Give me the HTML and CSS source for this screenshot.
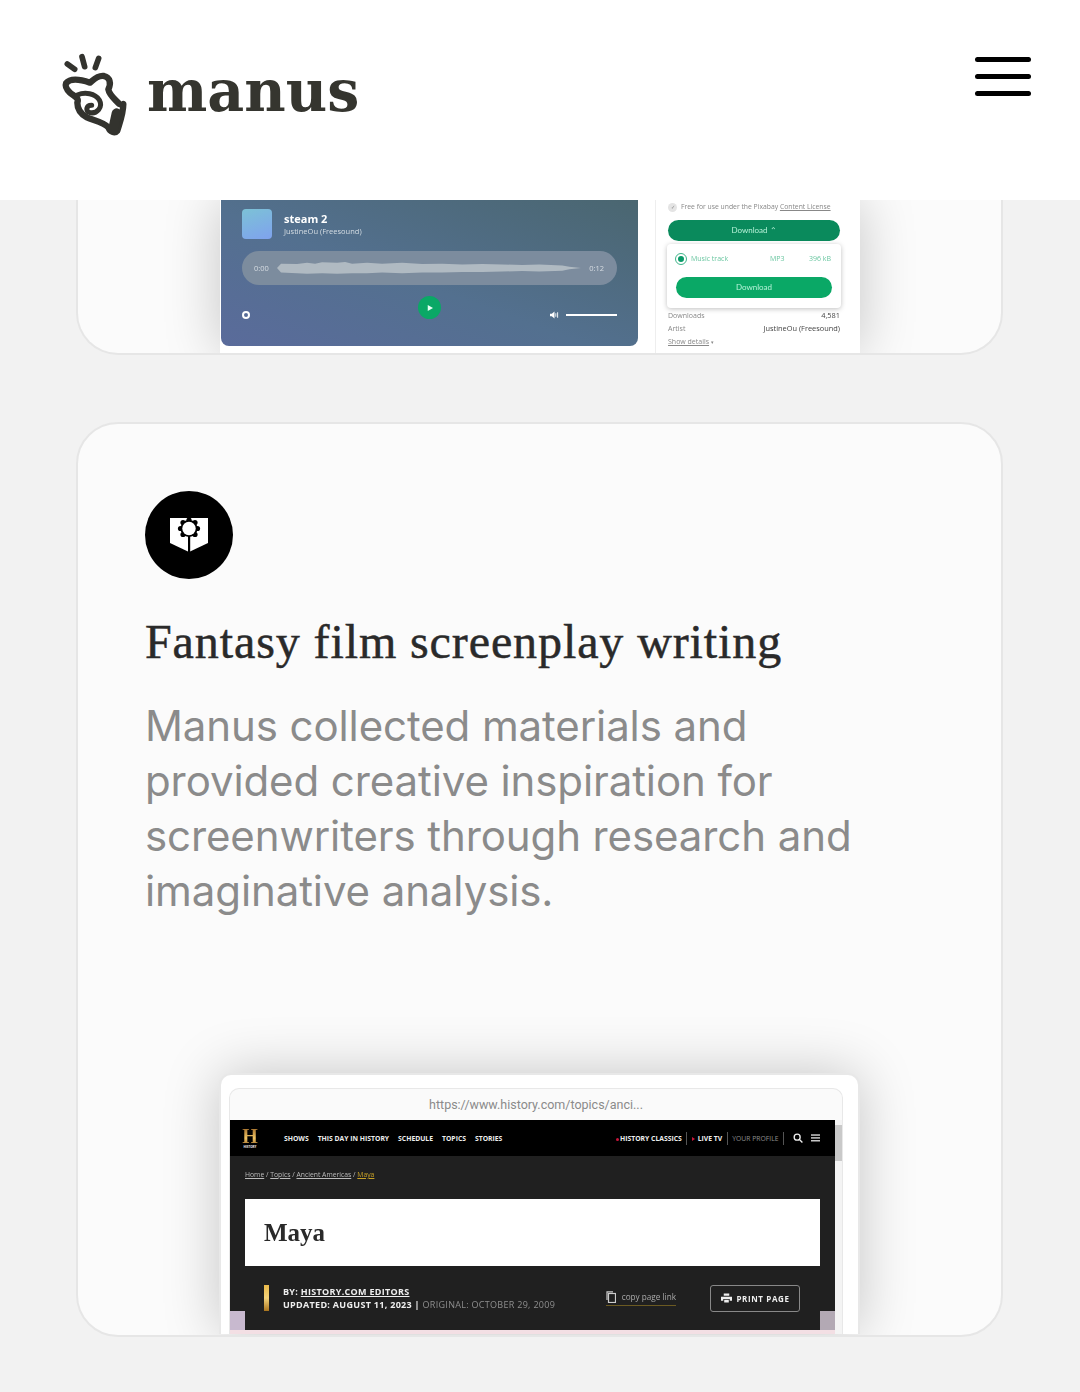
FILE: index.html
```html
<!DOCTYPE html>
<html lang="en">
<head>
  <meta charset="UTF-8" />
  <title>Manus</title>
  <link rel="stylesheet" href="styles.css">
</head>
<body>
  <header class="site-header">
    <a class="logo">
      <svg class="logo-mark" viewBox="60 66 204 258" fill="none" stroke="#33332e" stroke-linecap="round" stroke-linejoin="round">
        <path stroke-width="17" d="M82 102 L104 118 M126 80 L134 110 M176 85 L166 113" />
        <path stroke-width="19" d="M78 160 C90 145 120 148 150 158 C160 150 172 135 192 138 C210 142 214 160 205 178 C208 196 222 205 238 222 C246 226 250 222 250 222 C250 250 240 275 232 302 C224 312 210 305 205 292 C195 278 165 272 140 262 C120 250 112 235 112 218 C118 205 105 200 90 188 C80 178 74 170 78 160 Z" />
        <path stroke-width="15" d="M112 195 C135 185 165 190 178 210 C190 232 170 252 150 248 C135 244 138 226 155 226" />
        <path stroke-width="30" d="M230 250 L220 296" />
      </svg>
      <span class="logo-text">manus</span>
    </a>
    <div class="burger"><span></span><span></span><span></span></div>
  </header>

  <section class="card card-cut">
    <div class="preview audio-preview">
      <div class="player">
        <div class="track">
          <div class="cover"></div>
          <div>
            <div class="track-name">steam 2</div>
            <div class="track-artist">JustineOu (Freesound)</div>
          </div>
        </div>
        <div class="wave">
          <span>0:00</span>
          <svg class="wave-shape" viewBox="0 0 304 16" preserveAspectRatio="none">
            <path fill="#b0bac2" d="M0 8 L4 3 L20 3.5 L30 2 L38 3 L45 1.5 L60 2 L68 1 L75 3 L90 2 L105 3 L125 2 L145 3.5 L165 3 L185 4 L205 3.5 L225 4 L245 4.5 L262 4 L285 5 L292 6.5 L304 8 L292 9.5 L285 11 L262 12 L245 11.5 L225 12 L205 12.5 L185 12.5 L165 13 L145 13 L125 14 L105 13 L90 14 L75 14 L60 14.5 L45 14 L30 14.5 L20 14 L4 13 Z" />
          </svg>
          <span>0:12</span>
        </div>
        <div class="controls">
          <span class="repeat"></span>
          <span class="play">
            <svg viewBox="0 0 8 8" width="6" height="6"><path fill="#e8fff4" d="M1 0 L8 4 L1 8 Z" /></svg>
          </span>
          <span class="volume">
            <svg viewBox="0 0 10 8" width="9" height="8"><path fill="#fff" d="M0 2.5 H2 L5 0 V8 L2 5.5 H0 Z M6 2 H7 V6 H6 Z M8 1 H9 V7 H8 Z" /></svg>
            <span class="volume-bar"></span>
          </span>
        </div>
      </div>
      <aside class="side">
        <div class="license"><span class="check">✓</span>Free for use under the Pixabay <u>Content License</u></div>
        <div class="btn btn-dark">Download ⌃</div>
        <div class="popup">
          <div class="popup-row">
            <span class="radio"></span>
            <span class="popup-label">Music track</span>
            <span class="popup-format">MP3</span>
            <span>396 kB</span>
          </div>
          <div class="btn btn-green">Download</div>
        </div>
        <div class="meta-row"><span>Downloads</span><b>4,581</b></div>
        <div class="meta-row"><span>Artist</span><b>JustineOu (Freesound)</b></div>
        <div class="meta-row"><span><u>Show details</u> <span class="caret">▾</span></span></div>
      </aside>
    </div>
  </section>

  <section class="card card-main">
    <div class="card-icon">
      <svg viewBox="0 0 88 88" width="88" height="88">
        <path fill="#fff" d="M25 27 H63 V52 L44 61 L25 52 Z" />
        <g fill="#000">
          <circle cx="44" cy="37.5" r="8.5" />
          <circle cx="44" cy="29" r="2.6" />
          <circle cx="50" cy="31.5" r="2.6" />
          <circle cx="52.5" cy="37.5" r="2.6" />
          <circle cx="50" cy="43.5" r="2.6" />
          <circle cx="38" cy="43.5" r="2.6" />
          <circle cx="35.5" cy="37.5" r="2.6" />
          <circle cx="38" cy="31.5" r="2.6" />
          <rect x="43" y="45" width="2.2" height="17" />
        </g>
        <circle cx="44" cy="37.5" r="6.7" fill="#fff" />
      </svg>
    </div>
    <h2 class="card-title">Fantasy film screenplay writing</h2>
    <p class="card-text">Manus collected materials and provided creative inspiration for screenwriters through research and imaginative analysis.</p>

    <div class="preview browser-frame">
      <div class="browser">
        <div class="url-bar">https://www.history.com/topics/anci...</div>
        <div class="browser-body">
          <div class="site">
            <nav class="site-nav">
              <div class="h-logo"><span class="h-mark">H</span><span class="h-word">HISTORY</span></div>
              <span>SHOWS</span><span>THIS DAY IN HISTORY</span><span>SCHEDULE</span><span>TOPICS</span><span>STORIES</span>
              <div class="nav-right">
                <span><i class="red-dot"></i>HISTORY CLASSICS</span>
                <span class="nav-sep"></span>
                <span><i class="red-arrow"></i>LIVE TV</span>
                <span class="nav-sep"></span>
                <span class="nav-dim">YOUR PROFILE</span>
                <span class="nav-sep"></span>
                <svg class="nav-search" viewBox="0 0 12 12" width="10" height="10" fill="none" stroke="#eee" stroke-width="1.6"><circle cx="5" cy="5" r="3.6" /><path d="M8 8 L11.3 11.3" /></svg>
                <svg class="nav-menu" viewBox="0 0 10 8" width="9" height="8" fill="#eee"><rect width="10" height="1.4" /><rect y="3.2" width="10" height="1.4" /><rect y="6.4" width="10" height="1.4" /></svg>
              </div>
            </nav>
            <div class="site-body">
              <div class="gutter"><span class="strip strip-l"></span></div>
              <div class="site-main">
                <div class="crumbs"><u>Home</u> / <u>Topics</u> / <u>Ancient Americas</u> / <u class="crumb-now">Maya</u></div>
                <div class="hero">Maya</div>
                <div class="byline">
                  <span class="gold-bar"></span>
                  <div class="byline-text">
                    <div>BY: <u>HISTORY.COM EDITORS</u></div>
                    <div>UPDATED: AUGUST 11, 2023 | <span class="nav-dim">ORIGINAL: OCTOBER 29, 2009</span></div>
                  </div>
                  <div class="copy-link">
                    <svg viewBox="0 0 10 12" width="10" height="12" fill="none" stroke="#ccc" stroke-width="1.2"><rect x="2.5" y="2.5" width="7" height="9" /><path d="M1 9 V.8 H7" /></svg>
                    copy page link
                  </div>
                  <div class="print-btn">
                    <svg viewBox="0 0 12 10" width="11" height="10" fill="#eee"><path d="M3 0 H9 V2.5 H3 Z M0 3.5 H12 V8 H9.5 V6 H2.5 V8 H0 Z M3.5 7 H8.5 V10 H3.5 Z" /></svg>
                    PRINT PAGE
                  </div>
                </div>
              </div>
              <div class="gutter"><span class="strip strip-r"></span></div>
            </div>
          </div>
          <div class="scrollbar"><span class="thumb"></span></div>
        </div>
      </div>
      <div class="pink-edge"></div>
    </div>
  </section>
</body>
</html>
```

FILE: styles.css
```css
body {
  margin: 0;
  background: #f2f2f2;
  font-family: 'Liberation Sans', sans-serif;
  height: 1392px;
  overflow: hidden;
}

.site-header {
  height: 200px;
  background: #fff;
  box-sizing: border-box;
  padding: 52px 49px 0 60px;
  display: flex;
  justify-content: space-between;
  align-items: flex-start;
  position: relative;
  z-index: 2;
}

.logo {
  display: flex;
  gap: 19px;
}

.logo-mark {
  width: 68px;
  height: 86px;
}

.logo-text {
  font-family: 'DejaVu Serif', serif;
  font-weight: 700;
  font-size: 57px;
  line-height: 78px;
  color: #35352f;
}

.burger {
  display: flex;
  flex-direction: column;
  gap: 12px;
  width: 56px;
  margin-top: 5px;
}

.burger span {
  height: 5px;
  border-radius: 3px;
  background: #000;
}

.card {
  width: 927px;
  box-sizing: border-box;
  margin-left: 76px;
  background: #fbfbfb;
  border: 2px solid #e6e6e6;
  border-radius: 42px;
  overflow: hidden;
}

.card-cut {
  height: 155px;
  border-top: none;
  border-radius: 0 0 42px 42px;
  display: flex;
  justify-content: center;
}

.card-main {
  height: 915px;
  margin-top: 67px;
  padding: 67px 0 0 67px;
}

.preview {
  width: 640px;
  background: #fff;
  box-shadow: 0 0 55px rgba(0, 0, 0, 0.22);
}

/* audio card */
.audio-preview {
  height: 153px;
  margin-left: 1px;
  display: flex;
  align-items: flex-start;
  font-family: 'Open Sans', sans-serif;
}

.player {
  width: 417px;
  height: 146px;
  margin-left: 1px;
  box-sizing: border-box;
  padding: 9px 21px 0;
  border-radius: 0 0 8px 8px;
  background: linear-gradient(20deg, #5a6b9b 0%, #53708f 45%, #4a6670 100%);
  color: #fff;
  filter: blur(0.3px);
}

.track {
  display: flex;
  gap: 12px;
  align-items: center;
}

.cover {
  width: 30px;
  height: 30px;
  border-radius: 4px;
  background: linear-gradient(160deg, #7cc2d6, #7fa2ee);
}

.track-name {
  font-size: 11px;
  line-height: 15px;
  font-weight: 700;
}

.track-artist {
  font-size: 7.5px;
  line-height: 11px;
  color: #d5dde3;
}

.wave {
  margin-top: 12px;
  height: 34px;
  border-radius: 17px;
  background: #7c8c9e;
  display: flex;
  align-items: center;
  padding: 0 13px 0 12px;
  gap: 8px;
  font-size: 7.5px;
  color: #d6dce2;
}

.wave-shape {
  flex: 1;
  height: 14px;
}

.controls {
  margin-top: 12px;
  padding-top: 14px;
  display: flex;
  position: relative;
  justify-content: space-between;
  align-items: flex-start;
}

.repeat {
  width: 8px;
  height: 8px;
  box-sizing: border-box;
  border: 2.5px solid #fff;
  border-radius: 50%;
}

.play {
  position: absolute;
  left: 176px;
  top: -1px;
  width: 23px;
  height: 23px;
  border-radius: 50%;
  background: #0aa866;
  display: flex;
  align-items: center;
  justify-content: center;
}

.volume {
  display: flex;
  align-items: center;
  gap: 7px;
}

.volume-bar {
  width: 51px;
  height: 2px;
  background: #fff;
}

.side {
  flex: 1;
  margin-left: 17px;
  box-sizing: border-box;
  height: 153px;
  padding: 0 20px 0 12px;
  border-left: 1px solid #eee;
  font-size: 7px;
  color: #888;
  filter: blur(0.3px);
}

.license {
  font-size: 6.8px;
  line-height: 13px;
  white-space: nowrap;
}

.check {
  display: inline-block;
  width: 9px;
  height: 9px;
  line-height: 9px;
  margin-right: 4px;
  border-radius: 50%;
  background: #e4e4e4;
  text-align: center;
  font-size: 5px;
}

.btn {
  font-family: Lato, sans-serif;
  text-align: center;
  color: #b6f2d8;
  font-size: 8px;
  border-radius: 11px;
}

.btn-dark {
  margin-top: 7px;
  height: 21px;
  line-height: 21px;
  background: #0a8a5c;
}

.popup {
  margin: 3px -1px 0;
  height: 64px;
  box-sizing: border-box;
  padding: 8px 9px 0;
  border-radius: 4px;
  background: #fff;
  box-shadow: 0 1px 5px rgba(0, 0, 0, 0.25);
}

.popup-row {
  display: flex;
  align-items: center;
  color: #6cc7a2;
  font-size: 7px;
  height: 13px;
}

.radio {
  width: 6px;
  height: 6px;
  border: 2.5px solid #fff;
  outline: 1px solid #3fb58a;
  background: #0a9a68;
  border-radius: 50%;
  margin-right: 5px;
}

.popup-label {
  width: 79px;
}

.popup-format {
  width: 39px;
}

.btn-green {
  margin-top: 12px;
  height: 21px;
  line-height: 21px;
  background: #0aa866;
}

.meta-row {
  display: flex;
  justify-content: space-between;
  line-height: 13px;
  font-size: 7px;
}

.popup + .meta-row {
  margin-top: 1px;
}

.meta-row b {
  font-weight: 400;
  font-size: 7.4px;
  color: #444;
}

.caret {
  font-size: 5px;
}

/* main card */
.card-icon {
  width: 88px;
  height: 88px;
  border-radius: 50%;
  background: #000;
}

.card-title {
  margin: 35px 0 0;
  font-family: 'Liberation Serif', serif;
  font-weight: 400;
  font-size: 48px;
  line-height: 56px;
  letter-spacing: 0.9px;
  -webkit-text-stroke: 0.5px #2a2a2a;
  color: #2a2a2a;
  white-space: nowrap;
}

.card-text {
  margin: 28px 0 0;
  width: 730px;
  font-family: Inter, sans-serif;
  font-size: 42px;
  letter-spacing: -0.1px;
  line-height: 55px;
  color: #8b8b8b;
}

.browser-frame {
  margin: 155px 0 0 74px;
  width: 641px;
  height: 261px;
  box-sizing: border-box;
  padding: 13px 15px 0 8px;
  border: 2px solid #e8e8e8;
  border-bottom: none;
  border-radius: 12px 12px 0 0;
  overflow: hidden;
  position: relative;
}

.browser {
  border: 1px solid #e8e8e8;
  border-bottom: none;
  border-radius: 10px 10px 0 0;
  background: #fafafa;
  filter: blur(0.3px);
}

.url-bar {
  height: 31px;
  line-height: 31px;
  text-align: center;
  font-size: 12.5px;
  color: #8a8a8a;
  font-family: Roboto, sans-serif;
}

.browser-body {
  display: flex;
  height: 216px;
}

.site {
  width: 605px;
  background: #202020;
  color: #eee;
  font-family: 'Open Sans', sans-serif;
}

.site-nav {
  height: 36px;
  background: #000;
  display: flex;
  align-items: center;
  gap: 9px;
  padding: 0 15px 0 10px;
  font-size: 6.8px;
  font-weight: 700;
}

.h-logo {
  display: flex;
  flex-direction: column;
  align-items: center;
  width: 20px;
  margin-right: 15px;
}

.h-mark {
  font-family: 'Liberation Serif', serif;
  font-size: 20px;
  line-height: 17px;
  background: linear-gradient(#a5702c, #f0c565 60%, #a5702c);
  -webkit-background-clip: text;
  color: transparent;
}

.h-word {
  font-size: 3px;
  line-height: 4px;
}

.nav-right {
  margin-left: auto;
  display: flex;
  align-items: center;
  gap: 4.5px;
}

.nav-sep {
  width: 1px;
  height: 13px;
  background: #555;
}

.nav-dim {
  color: #8e8e8e;
  font-weight: 400;
}

.nav-search {
  margin-left: 4px;
}

.nav-menu {
  margin-left: 4px;
}

.red-dot {
  display: inline-block;
  width: 3px;
  height: 3px;
  border-radius: 50%;
  background: #c9153a;
  margin-right: 1px;
}

.red-arrow {
  display: inline-block;
  border-left: 3px solid #c9153a;
  border-top: 2px solid transparent;
  border-bottom: 2px solid transparent;
  margin-right: 3px;
}

.site-body {
  display: flex;
  height: 175px;
}

.gutter {
  width: 15px;
  display: flex;
  align-items: flex-end;
}

.strip {
  width: 100%;
  height: 20px;
}

.strip-l {
  background: #c8b9cf;
}

.strip-r {
  background: #b3a9b4;
}

.site-main {
  flex: 1;
  min-width: 0;
}

.crumbs {
  padding-top: 13px;
  font-size: 6.8px;
  line-height: 12px;
  color: #bbb;
}

.crumb-now {
  color: #c9a227;
}

.hero {
  margin-top: 18px;
  height: 67px;
  line-height: 67px;
  padding-left: 19px;
  background: #fff;
  color: #2a2a2a;
  font-family: 'Liberation Serif', serif;
  font-weight: 700;
  font-size: 25px;
}

.byline {
  display: flex;
  align-items: center;
  margin-top: 17px;
  height: 30px;
  padding: 0 20px 0 19px;
}

.gold-bar {
  width: 5px;
  height: 26px;
  background: linear-gradient(#e9b949, #f3d27a 50%, #a9741e);
}

.byline-text {
  margin-left: 14px;
  font-size: 9px;
  font-weight: 700;
  line-height: 13px;
  letter-spacing: 0.3px;
  white-space: nowrap;
}

.byline-text .nav-dim {
  font-weight: 400;
}

.copy-link {
  margin-left: auto;
  display: flex;
  align-items: center;
  gap: 6px;
  font-size: 8.2px;
  color: #aaa;
  border-bottom: 1px solid #6b5a22;
  padding-bottom: 2px;
}

.print-btn {
  margin-left: 34px;
  width: 90px;
  height: 27px;
  box-sizing: border-box;
  border: 1px solid #888;
  border-radius: 3px;
  display: flex;
  align-items: center;
  justify-content: center;
  gap: 5px;
  font-size: 8px;
  font-weight: 700;
  letter-spacing: 0.6px;
}

.scrollbar {
  flex: 1;
  background: #f4f4f4;
  padding-top: 5px;
}

.thumb {
  display: block;
  height: 36px;
  background: #c9c9c9;
}

.pink-edge {
  position: absolute;
  left: 9px;
  right: 23px;
  bottom: 0;
  height: 4px;
  background: #f3dfe4;
}
```
